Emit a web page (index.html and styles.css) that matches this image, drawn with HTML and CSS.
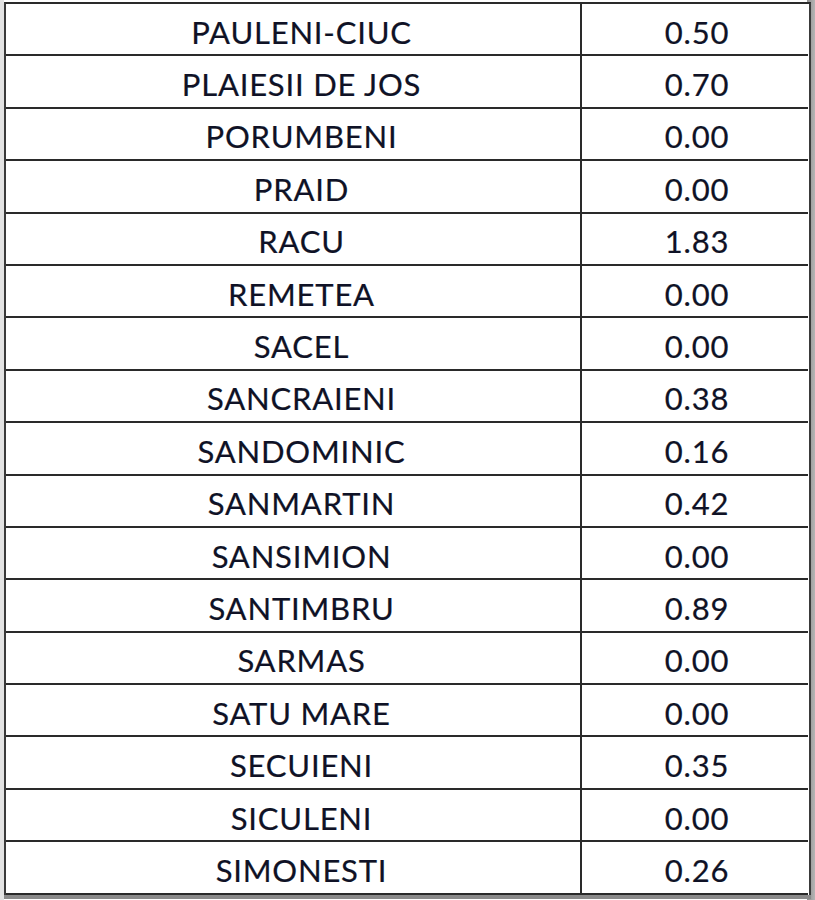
FILE: index.html
```html
<!DOCTYPE html>
<html>
<head>
<meta charset="utf-8">
<link rel="stylesheet" href="styles.css">
</head>
<body>
<div class="sheet">
  <div class="strip"></div>
  <div class="table">
    <div class="name">PAULENI-CIUC</div><div class="val">0.50</div>
    <div class="name">PLAIESII DE JOS</div><div class="val">0.70</div>
    <div class="name">PORUMBENI</div><div class="val">0.00</div>
    <div class="name">PRAID</div><div class="val">0.00</div>
    <div class="name">RACU</div><div class="val">1.83</div>
    <div class="name">REMETEA</div><div class="val">0.00</div>
    <div class="name">SACEL</div><div class="val">0.00</div>
    <div class="name">SANCRAIENI</div><div class="val">0.38</div>
    <div class="name">SANDOMINIC</div><div class="val">0.16</div>
    <div class="name">SANMARTIN</div><div class="val">0.42</div>
    <div class="name">SANSIMION</div><div class="val">0.00</div>
    <div class="name">SANTIMBRU</div><div class="val">0.89</div>
    <div class="name">SARMAS</div><div class="val">0.00</div>
    <div class="name">SATU MARE</div><div class="val">0.00</div>
    <div class="name">SECUIENI</div><div class="val">0.35</div>
    <div class="name">SICULENI</div><div class="val">0.00</div>
    <div class="name">SIMONESTI</div><div class="val">0.26</div>
  </div>
</div>
</body>
</html>
```
FILE: styles.css
```css
html, body {
  margin: 0;
  padding: 0;
  background: #ffffff;
  width: 815px;
  height: 900px;
  overflow: hidden;
}
.sheet {
  display: flex;
  height: 900px;
  background: linear-gradient(to right, #ffffff 0, #ffffff 807px, #8e8e8e 807px, #b5b5b5 815px);
}
.strip {
  width: 4px;
  background: #e3e3e3;
  flex: none;
}
.table {
  margin-top: 2px;
  width: 803px;
  align-self: flex-start;
  display: grid;
  grid-template-columns: 576px 226px;
  grid-auto-rows: 52.4px;
  border-top: 2px solid #2a2a2a;
  border-left: 2px solid #3a3a3a;
  border-right: 2px solid #3a3a3a;
  box-shadow: 0 4px 0 #8a8a8a;
  background: #fff;
  font-family: "Lato", "Open Sans", sans-serif;
  font-size: 31px;
  letter-spacing: 0.8px;
  color: #0f1226;
  -webkit-text-stroke: 0.2px #0f1226;
}
.name, .val {
  border-bottom: 2px solid #2a2a2a;
  display: flex;
  align-items: center;
  justify-content: center;
  padding-top: 5px;
  box-sizing: border-box;
}
.name {
  border-right: 2px solid #2a2a2a;
  padding-left: 17px;
}
.val {
  padding-left: 4px;
}
```
